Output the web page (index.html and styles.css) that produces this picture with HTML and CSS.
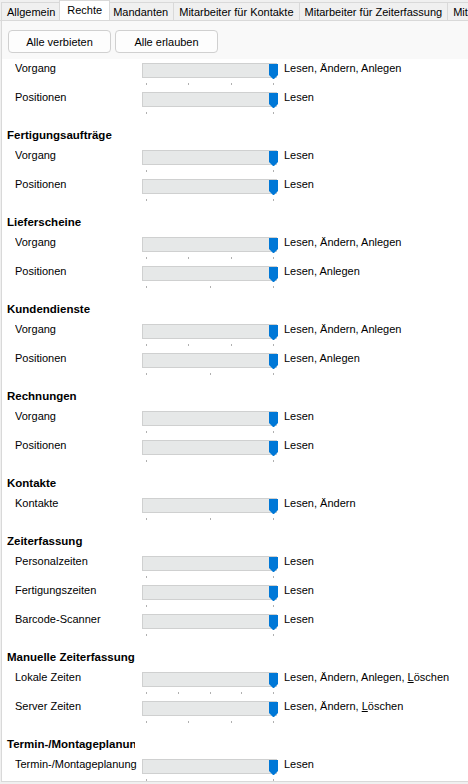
FILE: index.html
```html
<!DOCTYPE html>
<html lang="de">
<head>
<meta charset="utf-8">
<title>Rechte</title>
<link rel="stylesheet" href="styles.css">
</head>
<body>
<div class="window">
  <div class="tabs">
    <div class="tab">Allgemein</div>
    <div class="tab active">Rechte</div>
    <div class="tab">Mandanten</div>
    <div class="tab">Mitarbeiter für Kontakte</div>
    <div class="tab">Mitarbeiter für Zeiterfassung</div>
    <div class="tab">Mitarbeiter</div>
  </div>
  <div class="panel">
    <div class="toolbar">
      <button class="btn">Alle verbieten</button>
      <button class="btn">Alle erlauben</button>
    </div>
    <div class="scroll">
      <div class="content" id="content"></div>
    </div>
  </div>
</div>
<script src="app.js"></script>
</body>
</html>
```
FILE: app.js
```js
const data = [
  { h: null, rows: [["Vorgang", 4, "Lesen, Ändern, Anlegen"], ["Positionen", 2, "Lesen"]] },
  { h: "Fertigungsaufträge", rows: [["Vorgang", 2, "Lesen"], ["Positionen", 2, "Lesen"]] },
  { h: "Lieferscheine", rows: [["Vorgang", 4, "Lesen, Ändern, Anlegen"], ["Positionen", 3, "Lesen, Anlegen"]] },
  { h: "Kundendienste", rows: [["Vorgang", 4, "Lesen, Ändern, Anlegen"], ["Positionen", 3, "Lesen, Anlegen"]] },
  { h: "Rechnungen", rows: [["Vorgang", 2, "Lesen"], ["Positionen", 2, "Lesen"]] },
  { h: "Kontakte", rows: [["Kontakte", 3, "Lesen, Ändern"]] },
  { h: "Zeiterfassung", rows: [["Personalzeiten", 2, "Lesen"], ["Fertigungszeiten", 2, "Lesen"], ["Barcode-Scanner", 2, "Lesen"]] },
  { h: "Manuelle Zeiterfassung", rows: [["Lokale Zeiten", 5, "Lesen, Ändern, Anlegen, <u>L</u>öschen"], ["Server Zeiten", 4, "Lesen, Ändern, <u>L</u>öschen"]] },
  { h: "Termin-/Montageplanung", rows: [["Termin-/Montageplanung", 2, "Lesen"]] }
];

const thumb = '<svg class="thumb" width="9" height="15" viewBox="0 0 9 15"><path d="M0 0H9V11L5 15H4L0 11Z" fill="#0078d7"/></svg>';
let html = "";
for (const s of data) {
  if (s.h) html += `<div class="heading">${s.h}</div>`;
  for (const [label, n, value] of s.rows) {
    let ticks = "";
    for (let i = 0; i < n; i++) ticks += '<span class="tick"></span>';
    html += `<div class="row">
      <div class="label">${label}</div>
      <div class="slider">
        <div class="slider-top"><div class="track"></div>${thumb}</div>
        <div class="ticks">${ticks}</div>
      </div>
      <div class="value">${value}</div>
    </div>`;
  }
}
document.getElementById("content").innerHTML = html;
```
FILE: styles.css
```css
html, body {
  margin: 0;
  padding: 0;
}
body {
  background: #f0f0f0;
  font-family: "Liberation Sans", Arial, sans-serif;
  font-size: 11px;
  color: #000;
  width: 468px;
  height: 784px;
  overflow: hidden;
}
.window {
  display: flex;
  flex-direction: column;
}
.tabs {
  display: flex;
  height: 21px;
  box-sizing: border-box;
  border-bottom: 1px solid #d9d9d9;
  padding-left: 1px;
  background: #f0f0f0;
  white-space: nowrap;
  overflow: hidden;
}
.tab {
  margin-top: 2px;
  height: 18px;
  box-sizing: border-box;
  padding: 2px 5px 0;
  line-height: 14px;
  border: 1px solid #d9d9d9;
  border-bottom: none;
  border-left: none;
  background: #f0f0f0;
  flex: none;
}
.tab:first-child {
  border-left: 1px solid #d9d9d9;
  padding-left: 5px;
}
.tab.active {
  position: relative;
  z-index: 1;
  margin: 0 -2px 0 -2px;
  height: 21px;
  padding: 2px 7px 0;
  background: #fff;
  border-left: 1px solid #d9d9d9;
}
.panel {
  margin-left: 1px;
  border-left: 1px solid #d9d9d9;
  border-bottom: 1px solid #d9d9d9;
  background: #fff;
}
.toolbar {
  height: 38px;
  box-sizing: border-box;
  padding: 9px 0 0 6px;
  display: flex;
  gap: 4px;
  background: #f9f9f9;
}
.btn {
  width: 103px;
  height: 23px;
  box-sizing: border-box;
  border: 1px solid #d0d0d0;
  border-radius: 4px;
  background: #fdfdfd;
  font-family: "Liberation Sans", Arial, sans-serif;
  font-size: 11px;
  color: #000;
  padding: 0;
  margin: 0;
}
.scroll {
  height: 722px;
  overflow: hidden;
  background: #fff;
}
.content {
  padding-top: 2px;
}
.heading {
  height: 29px;
  box-sizing: border-box;
  padding: 9px 0 0 5px;
  width: 133px;
  font-weight: bold;
  font-size: 11.5px;
  line-height: 14px;
  white-space: nowrap;
  overflow: hidden;
}
.row {
  height: 29px;
  display: grid;
  grid-template-columns: 127px 136px auto;
  padding-left: 13px;
  line-height: 14px;
  white-space: nowrap;
}
.label {
  overflow: hidden;
}
.slider {
  padding-top: 2px;
}
.slider-top {
  display: grid;
  height: 16px;
}
.track,
.thumb {
  grid-area: 1 / 1;
}
.track {
  width: 135px;
  height: 15px;
  box-sizing: border-box;
  border: 1px solid #cfd0d0;
  background: #e6e8e8;
}
.thumb {
  justify-self: end;
  margin-top: 1px;
  display: block;
}
.ticks {
  margin: 4px 0 0 4px;
  width: 128px;
  height: 2px;
  display: flex;
  justify-content: space-between;
}
.tick {
  width: 1px;
  height: 2px;
  background: #b0b0b0;
}
.value {
  padding-left: 6px;
}
.value u {
  text-decoration-thickness: 1px;
  text-underline-offset: 1px;
}
```
